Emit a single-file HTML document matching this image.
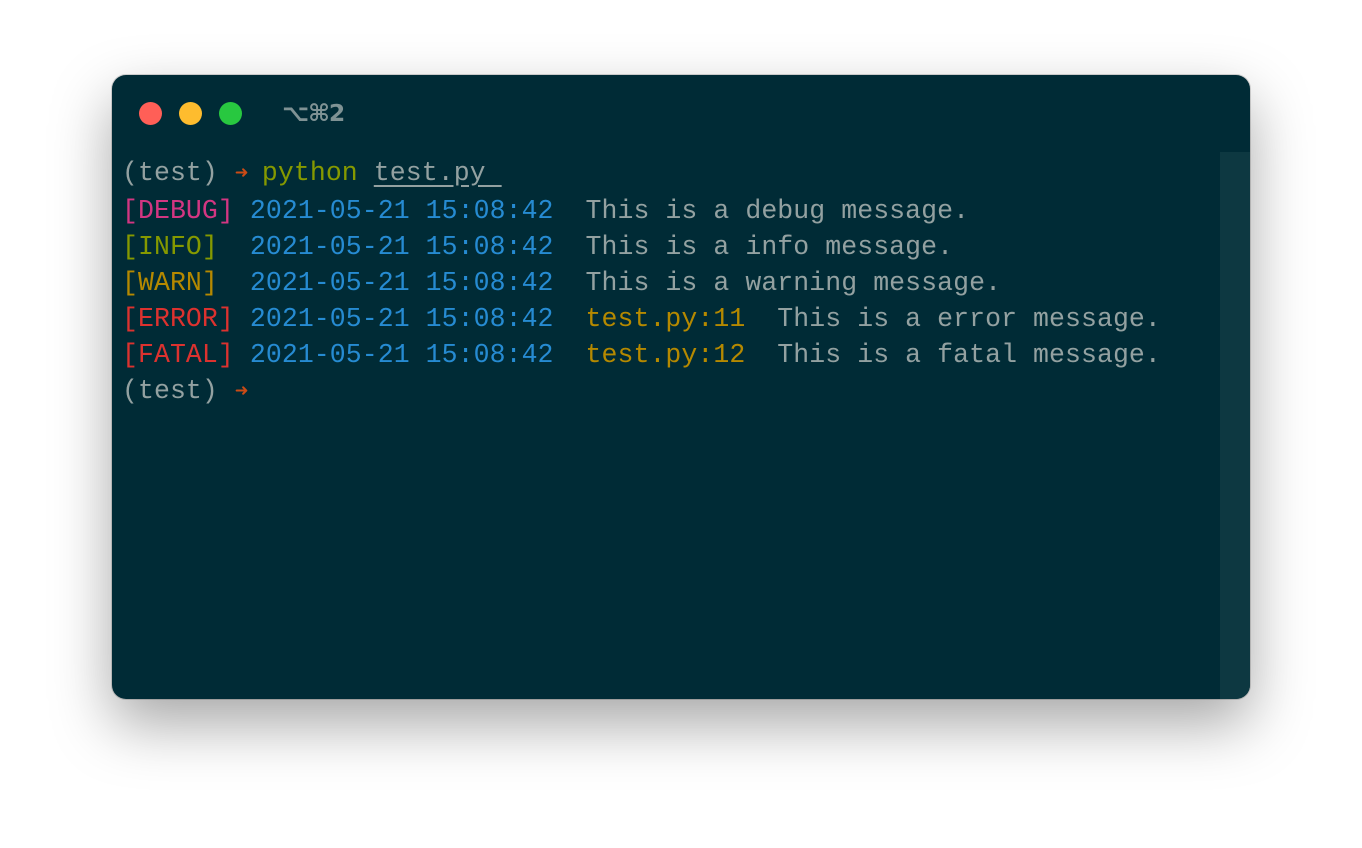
<!DOCTYPE html>
<html><head><style>
body{margin:0;width:1362px;height:848px;background:#fff;position:relative;overflow:hidden}
.win{position:absolute;left:112px;top:75px;width:1138px;height:624px;background:#002b36;border-radius:14px;box-shadow:0 25px 60px rgba(0,0,0,.35),0 0 0 1px rgba(0,0,0,.15);overflow:hidden}
.dot{position:absolute;top:27px;width:23px;height:23px;border-radius:50%}
.title{position:absolute;left:170px;top:24px;font:bold 23.5px "DejaVu Sans","Liberation Sans",sans-serif;color:#7f9294;letter-spacing:-1px}
.sb{position:absolute;left:1108px;top:77px;width:30px;height:547px;background:#0d3841}
.term{position:absolute;left:10px;top:79.5px;font:26.5px/36px "Liberation Mono","DejaVu Sans Mono",monospace;letter-spacing:0.08px;color:#93a1a1;white-space:pre}
.ar{display:inline-block;width:28px;color:#cb4b16;font-size:22px;font-weight:bold;text-indent:1px}
.p{color:#d33682}.g{color:#859900}.y{color:#b58900}.r{color:#dc322f}.b{color:#268bd2}
.u{text-decoration:underline;text-underline-offset:5px}
</style></head><body>
<div class="win">
<div class="dot" style="left:27px;background:#ff5f57"></div>
<div class="dot" style="left:67px;background:#febc2e"></div>
<div class="dot" style="left:107px;background:#28c840"></div>
<div class="title">⌥⌘2</div>
<div class="sb"></div>
<div class="term">(test) <span class="ar">➜</span><span class="g">python</span> <span class="u">test.py </span>
<span class="p">[DEBUG]</span> <span class="b">2021-05-21 15:08:42</span>  This is a debug message.
<span class="g">[INFO]</span>  <span class="b">2021-05-21 15:08:42</span>  This is a info message.
<span class="y">[WARN]</span>  <span class="b">2021-05-21 15:08:42</span>  This is a warning message.
<span class="r">[ERROR]</span> <span class="b">2021-05-21 15:08:42</span>  <span class="y">test.py:11</span>  This is a error message.
<span class="r">[FATAL]</span> <span class="b">2021-05-21 15:08:42</span>  <span class="y">test.py:12</span>  This is a fatal message.
(test) <span class="ar">➜</span></div>
</div>
</body></html>
